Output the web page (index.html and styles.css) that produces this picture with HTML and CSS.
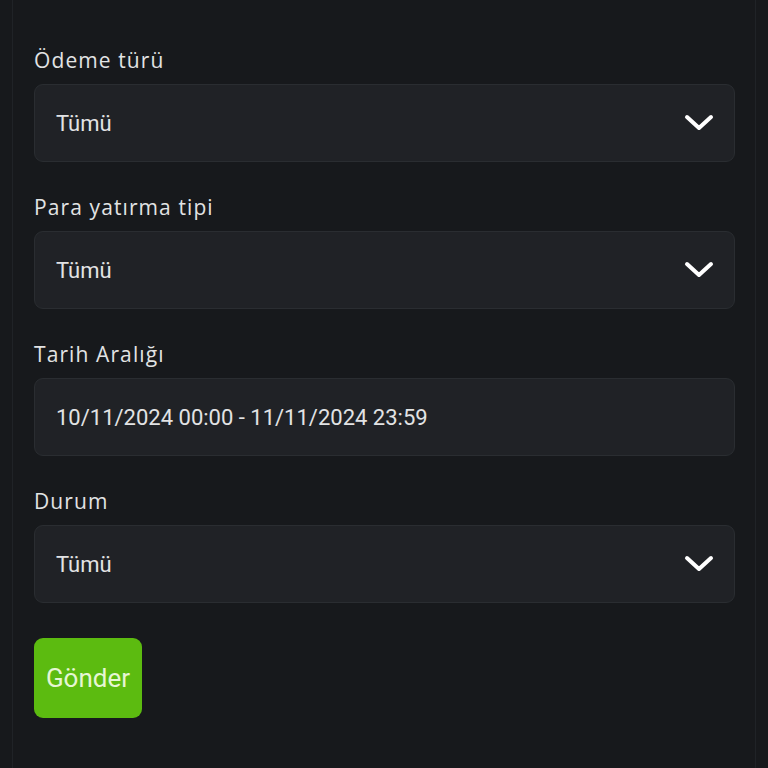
FILE: index.html
```html
<!DOCTYPE html>
<html lang="tr">
<head>
<meta charset="utf-8">
<link rel="stylesheet" href="styles.css">
</head>
<body>
<div class="page">
  <form class="form">
    <div class="field">
      <label class="label">Ödeme türü</label>
      <div class="control select">
        <span class="value">Tümü</span>
        <svg class="chev" width="30" height="18" viewBox="0 0 30 18"><path d="M3 3 L15 14 L27 3" fill="none" stroke="#ffffff" stroke-width="4" stroke-linecap="round" stroke-linejoin="round"/></svg>
      </div>
    </div>
    <div class="field">
      <label class="label">Para yatırma tipi</label>
      <div class="control select">
        <span class="value">Tümü</span>
        <svg class="chev" width="30" height="18" viewBox="0 0 30 18"><path d="M3 3 L15 14 L27 3" fill="none" stroke="#ffffff" stroke-width="4" stroke-linecap="round" stroke-linejoin="round"/></svg>
      </div>
    </div>
    <div class="field">
      <label class="label">Tarih Aralığı</label>
      <div class="control">
        <span class="value">10/11/2024 00:00 - 11/11/2024 23:59</span>
      </div>
    </div>
    <div class="field">
      <label class="label">Durum</label>
      <div class="control select">
        <span class="value">Tümü</span>
        <svg class="chev" width="30" height="18" viewBox="0 0 30 18"><path d="M3 3 L15 14 L27 3" fill="none" stroke="#ffffff" stroke-width="4" stroke-linecap="round" stroke-linejoin="round"/></svg>
      </div>
    </div>
    <button type="button" class="submit">Gönder</button>
  </form>
</div>
</body>
</html>
```
FILE: styles.css
```css
html, body {
  margin: 0;
  padding: 0;
  background: #17191c;
  height: 100%;
}
.page {
  margin: 0 12px 0 12px;
  min-height: 768px;
  border-left: 1px solid #202327;
  border-right: 1px solid #202327;
  box-sizing: border-box;
  padding: 46px 20px 0 21px;
}
.form {
  display: flex;
  flex-direction: column;
}
.field {
  display: flex;
  flex-direction: column;
  gap: 10px;
  margin-bottom: 31px;
}
.field:nth-child(4) {
  margin-bottom: 35px;
}
.label {
  font-family: "Open Sans", sans-serif;
  font-weight: 400;
  font-size: 21px;
  line-height: 28px;
  letter-spacing: 1.1px;
  color: #e2e3e4;
}
.control {
  height: 78px;
  box-sizing: border-box;
  background: #202226;
  border: 1px solid #2a2d31;
  border-radius: 9px;
  display: flex;
  align-items: center;
  justify-content: space-between;
  padding: 0 20px 0 21px;
}
.value {
  font-family: "Roboto", sans-serif;
  font-size: 22px;
  color: #e2e3e4;
}
.chev {
  display: block;
}
.submit {
  align-self: flex-start;
  width: 108px;
  height: 80px;
  border: none;
  border-radius: 9px;
  background: #5cbb10;
  color: #e6f6d4;
  font-family: "Roboto", sans-serif;
  font-size: 26px;
  padding: 0;
}
```
